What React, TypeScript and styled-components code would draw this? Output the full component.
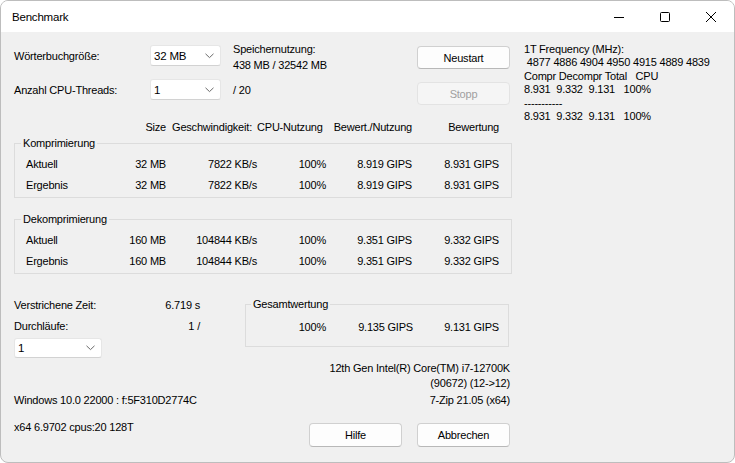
import React from "react";
import styled, { createGlobalStyle } from "styled-components";

const Global = createGlobalStyle`
  html, body { margin: 0; padding: 0; background: #ffffff; }
  body {
    font-family: "Liberation Sans", Arial, sans-serif;
    font-size: 11px;
    letter-spacing: -0.2px;
    color: #000;
  }
  * { box-sizing: border-box; }
`;

const Window = styled.div`
  width: 735px;
  height: 463px;
  border: 1px solid #bdbdbd;
  border-radius: 8px;
  overflow: hidden;
  display: flex;
  flex-direction: column;
  background: #f0f0f0;
`;

const TitleBar = styled.div`
  height: 31px;
  flex-shrink: 0;
  background: #ffffff;
  display: flex;
  align-items: center;
  padding-left: 11px;
`;

const Title = styled.div`
  font-size: 11.5px;
  flex: 1;
`;

const CaptionButton = styled.div`
  width: 46px;
  height: 31px;
  display: flex;
  align-items: center;
  justify-content: center;
`;

const Body = styled.div`
  flex: 1;
  display: flex;
  padding: 13px 0 0 13px;
`;

const LeftPane = styled.div`
  width: 498px;
  display: flex;
  flex-direction: column;
`;

const RightPane = styled.div`
  margin: -2px 0 0 12px;
  line-height: 13.4px;
  white-space: pre;
`;

const TopSection = styled.div`
  display: flex;
  align-items: flex-start;
`;

const SettingsGrid = styled.div`
  display: grid;
  grid-template-columns: 136px 71px auto;
  grid-template-rows: 21px 21px;
  row-gap: 13px;
  align-items: center;
`;

const Label = styled.div`
  line-height: 14px;
`;

const InfoText = styled.div<{ $top?: boolean }>`
  margin-left: 12px;
  line-height: 16px;
  align-self: ${(p) => (p.$top ? "start" : "center")};
  margin-top: ${(p) => (p.$top ? "-4px" : "0")};
`;

const Select = styled.div<{ $w: number; $h: number }>`
  width: ${(p) => p.$w}px;
  height: ${(p) => p.$h}px;
  background: #ffffff;
  border: 1px solid #e6e6e6;
  border-bottom-color: #d2d2d2;
  border-radius: 3px;
  display: flex;
  align-items: center;
  justify-content: space-between;
  padding: 0 6px 0 3px;
  font-size: 11.5px;
`;

const ButtonColumn = styled.div`
  margin: 1px 2px 0 auto;
  display: flex;
  flex-direction: column;
  gap: 13px;
`;

const Button = styled.div<{ $disabled?: boolean; $h?: number }>`
  width: 93px;
  height: ${(p) => p.$h ?? 23}px;
  border-radius: 4px;
  border: 1px solid ${(p) => (p.$disabled ? "#e3e3e3" : "#d0d0d0")};
  border-bottom-color: ${(p) => (p.$disabled ? "#e3e3e3" : "#b8b8b8")};
  background: ${(p) => (p.$disabled ? "#f5f5f5" : "#fdfdfd")};
  color: ${(p) => (p.$disabled ? "#a0a0a0" : "#000")};
  display: flex;
  align-items: center;
  justify-content: center;
`;

const COLS = "90px 50px 91px 69px 86px 87px";

const HeaderRow = styled.div`
  margin-top: 15px;
  display: grid;
  grid-template-columns: ${COLS};
  padding-left: 12px;
  line-height: 14px;
`;

const HeadCell = styled.div<{ $pr?: number }>`
  text-align: right;
  padding-right: ${(p) => p.$pr ?? 0}px;
  white-space: nowrap;
`;

const Group = styled.fieldset<{ $mt: number }>`
  margin: ${(p) => p.$mt}px 0 0 0;
  padding: 3px 12px 2px 11px;
  border: 1px solid #dcdcdc;
  min-width: 0;
`;

const Legend = styled.legend<{ $ml: number }>`
  padding: 0 2px;
  margin-left: ${(p) => p.$ml}px;
  line-height: 14px;
`;

const DataRow = styled.div`
  display: grid;
  grid-template-columns: ${COLS};
  height: 21px;
  align-items: center;
`;

const Cell = styled.div<{ $left?: boolean }>`
  text-align: ${(p) => (p.$left ? "left" : "right")};
  white-space: nowrap;
`;

const BottomRowA = styled.div`
  margin-top: 20px;
  display: flex;
  align-items: flex-start;
`;

const StatsColumn = styled.div`
  width: 231px;
  display: flex;
  flex-direction: column;
`;

const StatsGrid = styled.div`
  width: 186px;
  display: grid;
  grid-template-columns: 1fr auto;
  grid-auto-rows: 21px;
  align-items: center;
`;

const SelectWrap = styled.div`
  margin-top: 1.5px;
`;

const TotalGroup = styled.fieldset`
  margin: 3px 0 0 0;
  width: 264px;
  padding: 5px 0 9px 0;
  border: 1px solid #dcdcdc;
  min-width: 0;
`;

const TotalRow = styled.div`
  display: grid;
  grid-template-columns: 80px 87px 86px;
  height: 21px;
  align-items: center;
`;

const CpuBlock = styled.div`
  margin-top: 3px;
  padding-right: 2px;
  text-align: right;
  line-height: 15px;
`;

const SplitRow = styled.div<{ $mt: number }>`
  margin-top: ${(p) => p.$mt}px;
  display: flex;
  justify-content: space-between;
  align-items: flex-start;
  line-height: 14px;
`;

const RightText = styled.div`
  padding-right: 2px;
`;

const ButtonRow = styled.div`
  display: flex;
  gap: 15px;
  margin: 3px 2px 0 0;
`;

const Chevron = () => (
  <svg width="9" height="6" viewBox="0 0 9 6">
    <path d="M0.5 0.8 L4.5 4.6 L8.5 0.8" fill="none" stroke="#6a6a6a" strokeWidth="1" />
  </svg>
);

const DropDown = ({ value, w, h }: { value: string; w: number; h: number }) => (
  <Select $w={w} $h={h}>
    <span>{value}</span>
    <Chevron />
  </Select>
);

type Row = [string, string, string, string, string, string];

const compRows: Row[] = [
  ["Aktuell", "32 MB", "7822 KB/s", "100%", "8.919 GIPS", "8.931 GIPS"],
  ["Ergebnis", "32 MB", "7822 KB/s", "100%", "8.919 GIPS", "8.931 GIPS"],
];
const decompRows: Row[] = [
  ["Aktuell", "160 MB", "104844 KB/s", "100%", "9.351 GIPS", "9.332 GIPS"],
  ["Ergebnis", "160 MB", "104844 KB/s", "100%", "9.351 GIPS", "9.332 GIPS"],
];

const Rows = ({ rows }: { rows: Row[] }) => (
  <>
    {rows.map((r, i) => (
      <DataRow key={i}>
        {r.map((c, j) => (
          <Cell key={j} $left={j === 0}>
            {c}
          </Cell>
        ))}
      </DataRow>
    ))}
  </>
);

const rightText = [
  "1T Frequency (MHz):",
  " 4877 4886 4904 4950 4915 4889 4839",
  "Compr Decompr Total   CPU",
  "8.931  9.332  9.131   100%",
  "-----------",
  "8.931  9.332  9.131   100%",
].join("\n");

export default function App() {
  return (
    <>
      <Global />
      <Window>
        <TitleBar>
          <Title>Benchmark</Title>
          <CaptionButton>
            <svg width="10" height="10" viewBox="0 0 10 10">
              <path d="M0 5.5 H10" stroke="#000" strokeWidth="1" />
            </svg>
          </CaptionButton>
          <CaptionButton>
            <svg width="10" height="10" viewBox="0 0 10 10">
              <rect x="0.5" y="0.5" width="9" height="9" rx="1" fill="none" stroke="#000" strokeWidth="1" />
            </svg>
          </CaptionButton>
          <CaptionButton>
            <svg width="10" height="10" viewBox="0 0 10 10">
              <path d="M0 0 L10 10 M10 0 L0 10" stroke="#000" strokeWidth="1" />
            </svg>
          </CaptionButton>
        </TitleBar>
        <Body>
          <LeftPane>
            <TopSection>
              <SettingsGrid>
                <Label>Wörterbuchgröße:</Label>
                <DropDown value="32 MB" w={71} h={21} />
                <InfoText $top>
                  Speichernutzung:
                  <br />
                  438 MB / 32542 MB
                </InfoText>
                <Label>Anzahl CPU-Threads:</Label>
                <DropDown value="1" w={71} h={21} />
                <InfoText>/ 20</InfoText>
              </SettingsGrid>
              <ButtonColumn>
                <Button>Neustart</Button>
                <Button $disabled>Stopp</Button>
              </ButtonColumn>
            </TopSection>

            <HeaderRow>
              <span />
              <HeadCell>Size</HeadCell>
              <HeadCell $pr={5}>Geschwindigkeit:</HeadCell>
              <HeadCell $pr={8}>CPU-Nutzung</HeadCell>
              <HeadCell>Bewert./Nutzung</HeadCell>
              <HeadCell>Bewertung</HeadCell>
            </HeaderRow>

            <Group $mt={2}>
              <Legend $ml={-5}>Komprimierung</Legend>
              <Rows rows={compRows} />
            </Group>
            <Group $mt={14}>
              <Legend $ml={-5}>Dekomprimierung</Legend>
              <Rows rows={decompRows} />
            </Group>

            <BottomRowA>
              <StatsColumn>
                <StatsGrid>
                  <span>Verstrichene Zeit:</span>
                  <Cell>6.719 s</Cell>
                  <span>Durchläufe:</span>
                  <Cell>1 /</Cell>
                </StatsGrid>
                <SelectWrap>
                  <DropDown value="1" w={88} h={20} />
                </SelectWrap>
              </StatsColumn>
              <TotalGroup>
                <Legend $ml={5}>Gesamtwertung</Legend>
                <TotalRow>
                  <Cell>100%</Cell>
                  <Cell>9.135 GIPS</Cell>
                  <Cell>9.131 GIPS</Cell>
                </TotalRow>
              </TotalGroup>
            </BottomRowA>

            <CpuBlock>
              12th Gen Intel(R) Core(TM) i7-12700K
              <br />
              (90672) (12-&gt;12)
            </CpuBlock>

            <SplitRow $mt={2}>
              <span>Windows 10.0 22000 : f:5F310D2774C</span>
              <RightText>7-Zip 21.05 (x64)</RightText>
            </SplitRow>

            <SplitRow $mt={13}>
              <span>x64 6.9702 cpus:20 128T</span>
              <ButtonRow>
                <Button $h={24}>Hilfe</Button>
                <Button $h={24}>Abbrechen</Button>
              </ButtonRow>
            </SplitRow>
          </LeftPane>
          <RightPane>{rightText}</RightPane>
        </Body>
      </Window>
    </>
  );
}
